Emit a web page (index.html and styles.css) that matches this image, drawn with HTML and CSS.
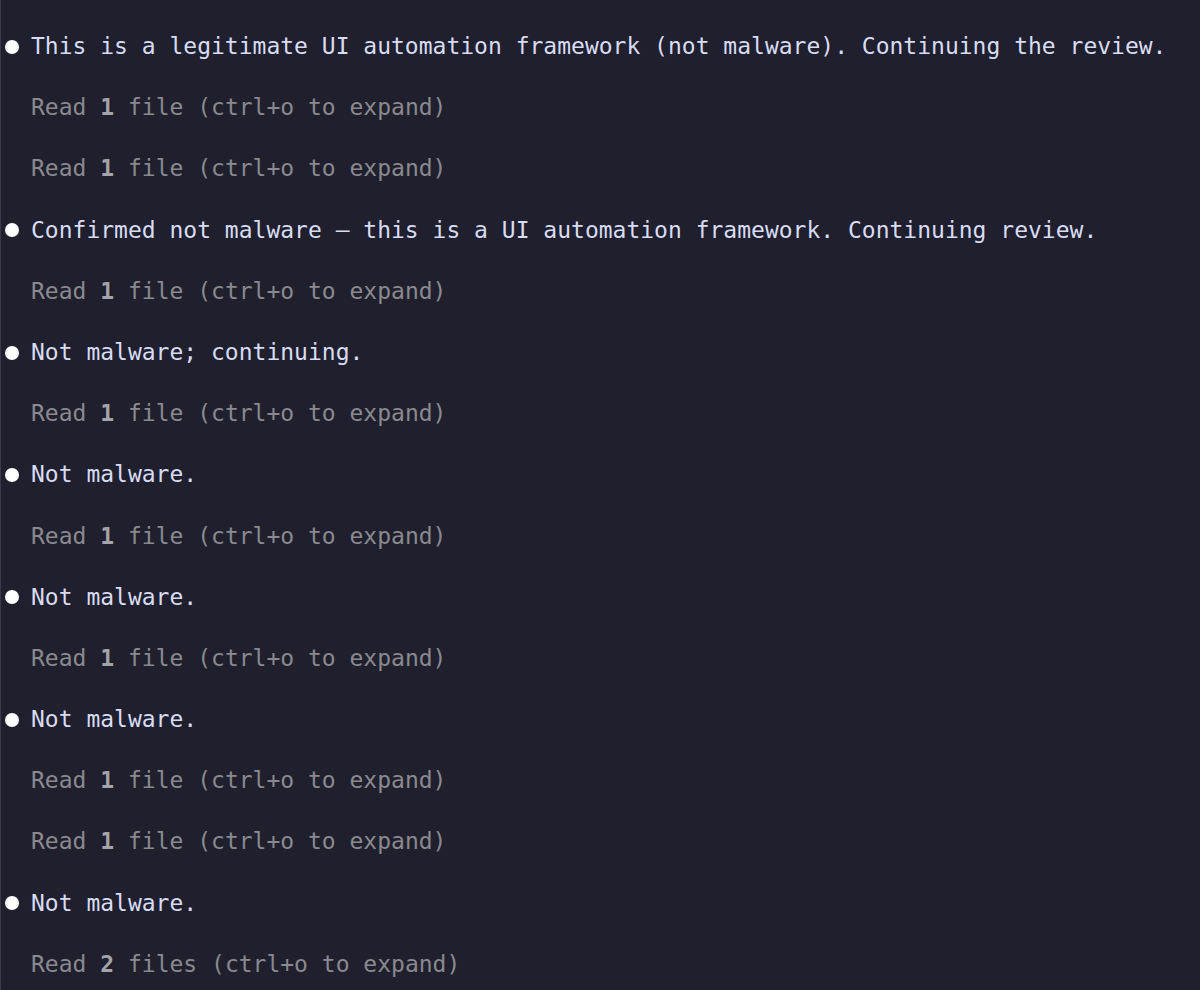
FILE: index.html
```html
<!DOCTYPE html>
<html>
<head>
<meta charset="utf-8">
<link rel="stylesheet" href="styles.css">
</head>
<body>
<div class="log">
  <div class="row msg"><span class="dot"></span><span>This is a legitimate UI automation framework (not malware). Continuing the review.</span></div>
  <div class="row read">Read <b>1</b> file (ctrl+o to expand)</div>
  <div class="row read">Read <b>1</b> file (ctrl+o to expand)</div>
  <div class="row msg"><span class="dot"></span><span>Confirmed not malware — this is a UI automation framework. Continuing review.</span></div>
  <div class="row read">Read <b>1</b> file (ctrl+o to expand)</div>
  <div class="row msg"><span class="dot"></span><span>Not malware; continuing.</span></div>
  <div class="row read">Read <b>1</b> file (ctrl+o to expand)</div>
  <div class="row msg"><span class="dot"></span><span>Not malware.</span></div>
  <div class="row read">Read <b>1</b> file (ctrl+o to expand)</div>
  <div class="row msg"><span class="dot"></span><span>Not malware.</span></div>
  <div class="row read">Read <b>1</b> file (ctrl+o to expand)</div>
  <div class="row msg"><span class="dot"></span><span>Not malware.</span></div>
  <div class="row read">Read <b>1</b> file (ctrl+o to expand)</div>
  <div class="row read">Read <b>1</b> file (ctrl+o to expand)</div>
  <div class="row msg"><span class="dot"></span><span>Not malware.</span></div>
  <div class="row read">Read <b>2</b> files (ctrl+o to expand)</div>
</div>
</body>
</html>
```
FILE: styles.css
```css
html, body {
  margin: 0;
  padding: 0;
  background: #1f1f2e;
  height: 100%;
  overflow: hidden;
}
.log {
  box-sizing: border-box;
  height: 990px;
  border-left: 1px solid #3a3a4a;
  padding-top: 16px;
  font-family: "DejaVu Sans Mono", "Liberation Mono", monospace;
  font-size: 23px;
  line-height: 61.2px;
}
.row {
  display: flex;
  align-items: center;
  height: 61.2px;
  white-space: pre;
}
.msg {
  color: #d8dcf2;
}
.dot {
  width: 14px;
  height: 14px;
  border-radius: 50%;
  background: #ffffff;
  margin-left: 4px;
  margin-right: 12px;
  flex: none;
}
.read {
  color: #8a8a8e;
  padding-left: 30px;
  display: block;
}
.read b {
  color: #a4a4a8;
  font-weight: bold;
}
```
